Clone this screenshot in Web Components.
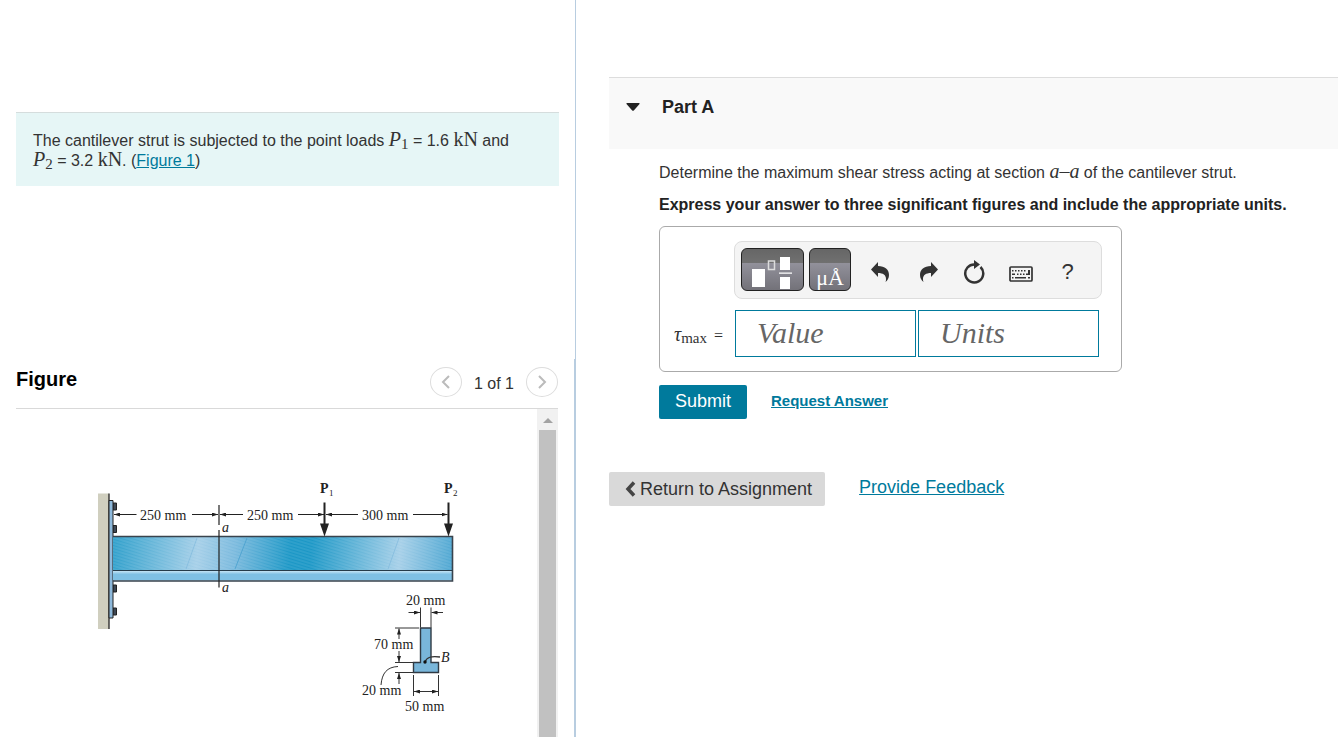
<!DOCTYPE html>
<html lang="en">
<head>
    <meta charset="utf-8">
    <meta name="viewport" content="width=device-width, initial-scale=1">
    <title>Cantilever strut</title>
    <style>
        body {
            margin: 0;
            font-family: "Liberation Sans", Arial, sans-serif;
            font-size: 16px;
            line-height: 20px;
            color: #333;
            background-color: #fff;
        }
    </style>
</head>
<body>
    <my-app></my-app>

    <script>
        class BaseElement extends HTMLElement {
            constructor() {
                super()

                this.attachShadow({ mode: 'open' });
            }
            connectedCallback() {
                // trimmed, so that inline elements add no spaces of their own
                this.shadowRoot.innerHTML = this.getTemplate().trim() + this.getStyles().trim();
            }
        }

        // Inline math: italic variable with an optional subscript
        class MathVar extends BaseElement {
            getTemplate() {
                return `<slot></slot><sub><slot name="sub"></slot></sub>`;
            }
            getStyles() {
                return `
                    <style>
                        :host {
                            font: italic 20px/1px "Liberation Serif", serif;
                        }
                        :host([upright]) {
                            font-style: normal;
                        }
                        sub {
                            font-size: 15px;
                            font-style: normal;
                            line-height: 1px;
                            vertical-align: -3px;
                        }
                    </style>
                `;
            }
        }
        customElements.define('math-var', MathVar);

        class ProblemStatement extends BaseElement {
            getTemplate() {
                return `<p><slot></slot></p>`;
            }
            getStyles() {
                return `
                    <style>
                        :host {
                            display: block;
                            padding: 18px 17px 15px;
                            border-top: 1px solid #d5dddd;
                            background-color: #e6f6f6;
                        }
                        p {
                            margin: 0;
                        }
                    </style>
                `;
            }
        }
        customElements.define('problem-statement', ProblemStatement);

        class CantileverDrawing extends BaseElement {
            getTemplate() {
                return `
                    <svg viewBox="16 409 521 328" role="img" aria-label="Cantilever strut with loads and cross section">
                        <defs>
                            <linearGradient id="web" gradientUnits="userSpaceOnUse" x1="113" y1="540" x2="453" y2="572">
                                <stop offset="0" stop-color="#2e9fcb"/>
                                <stop offset=".25" stop-color="#a5cfe8"/>
                                <stop offset=".36" stop-color="#79b9dd"/>
                                <stop offset=".52" stop-color="#1b97c6"/>
                                <stop offset=".58" stop-color="#1b97c6"/>
                                <stop offset=".84" stop-color="#a5cfe8"/>
                                <stop offset="1" stop-color="#4aa5d1"/>
                            </linearGradient>
                            <linearGradient id="flange" x1="0" y1="0" x2="0" y2="1">
                                <stop offset="0" stop-color="#c5e4f5"/>
                                <stop offset=".35" stop-color="#7fc0e4"/>
                                <stop offset="1" stop-color="#7fc0e4"/>
                            </linearGradient>
                            <pattern id="grain" width="12" height="3" patternUnits="userSpaceOnUse" patternTransform="rotate(17)">
                                <path d="M0 1h12" stroke="#fff" stroke-opacity=".16"/>
                            </pattern>
                            <marker id="tip" viewBox="0 0 6 4" refX="6" refY="2" markerWidth="6" markerHeight="4" markerUnits="userSpaceOnUse" orient="auto-start-reverse">
                                <path d="M0 0 6 2 0 4z" fill="#222"/>
                            </marker>
                        </defs>

                        <!-- wall and mounting plate -->
                        <path d="M98 493.500h11v135.500h-11z" fill="#d0cfbf"/>
                        <path d="M109 493.500v135.500" stroke="#222" stroke-width="1.300"/>
                        <g fill="#3e4854" stroke="#222">
                            <path d="M113 503h3.500v7h-3.500zM113 525.500h3.500v7h-3.500zM113 585h3.500v7h-3.500zM113 608h3.500v7h-3.500z"/>
                        </g>
                        <path d="M109 500.500h4v117.500h-4z" fill="#8eb9db" stroke="#222"/>

                        <!-- beam -->
                        <path d="M113 536.500h339.500v34h-339.500z" fill="url(#web)"/>
                        <path d="M113 536.500h339.500v34h-339.500z" fill="url(#grain)"/>
                        <path d="M197 538l-11 31M399 538l-11 31" stroke="#7fb9dc" stroke-width=".7"/>
                        <path d="M247 538l-12 31" stroke="#48a0ce" stroke-width=".8"/>
                        <path d="M113 571h339.500v9.500h-339.500z" fill="url(#flange)"/>
                        <path d="M113 536.500h339.500v44.500h-339.500" fill="none" stroke="#39434d" stroke-width="1.600"/>
                        <path d="M113 570.500h339.500" stroke="#263b4a" stroke-width="1.200"/>
                        <path d="M219 505v20M219 530v57.500" stroke="#222" stroke-width="1.200"/>

                        <!-- dimensions along the beam -->
                        <g stroke="#222" stroke-width="1" fill="none">
                            <path d="M136.500 514.500H114" marker-end="url(#tip)"/>
                            <path d="M192 514.500h26" marker-end="url(#tip)"/>
                            <path d="M243 514.500h-23" marker-end="url(#tip)"/>
                            <path d="M298 514.500h26" marker-end="url(#tip)"/>
                            <path d="M358 514.500h-32" marker-end="url(#tip)"/>
                            <path d="M413 514.500h34.500" marker-end="url(#tip)"/>
                        </g>
                        <path d="M324.500 502.500v24M448.500 502.500v24" stroke="#222" stroke-width="2"/>
                        <path d="M320 523.500h9l-4.500 13zM444 523.500h9l-4.500 13z" fill="#222"/>

                        <!-- cross section -->
                        <path d="M420.500 628h10.500v34.500h7.500v10h-25v-10h7z" fill="#79b6da" stroke="#303a44" stroke-width="1.400"/>
                        <g stroke="#333" stroke-width="1" fill="none">
                            <path d="M420.500 607.500v20M431 607.500v20M395 628h24M395 662.500h18M395 672.500h18M413.500 675v21M438.500 675v21"/>
                            <path d="M408.500 612.500h11.500" marker-end="url(#tip)"/>
                            <path d="M443 612.500h-11.500" marker-end="url(#tip)"/>
                            <path d="M399 639v-10.500" marker-end="url(#tip)"/>
                            <path d="M399 651v11" marker-end="url(#tip)"/>
                            <path d="M399 684v-11" marker-end="url(#tip)"/>
                            <path d="M414 691.500h24" marker-start="url(#tip)" marker-end="url(#tip)"/>
                            <path d="M381 685c1-12 6-18 17-18.500"/>
                            <path d="M425 662c2-5 6-6 15-5" stroke-width="1.300"/>
                        </g>
                        <circle cx="425" cy="662" r="1.700" fill="#111"/>

                        <g font-size="14" fill="#222">
                            <text x="140" y="520">250 mm</text>
                            <text x="247" y="520">250 mm</text>
                            <text x="362" y="520">300 mm</text>
                            <text x="406" y="605">20 mm</text>
                            <text x="374" y="649">70 mm</text>
                            <text x="362" y="695">20 mm</text>
                            <text x="405" y="711">50 mm</text>
                            <g font-style="italic">
                                <text x="222" y="532">a</text>
                                <text x="222" y="592">a</text>
                                <text x="441" y="662">B</text>
                            </g>
                            <text x="320" y="493" font-weight="bold">P</text>
                            <text x="329" y="496" font-size="9">1</text>
                            <text x="444" y="493" font-weight="bold">P</text>
                            <text x="453" y="496" font-size="9">2</text>
                        </g>
                    </svg>
                `;
            }
            getStyles() {
                return `
                    <style>
                        :host {
                            display: block;
                        }
                        svg {
                            display: block;
                            width: 100%;
                            font-family: "Liberation Serif", serif;
                        }
                    </style>
                `;
            }
        }
        customElements.define('cantilever-drawing', CantileverDrawing);

        class FigurePanel extends BaseElement {
            getTemplate() {
                return `
                    <header>
                        <h2>Figure</h2>
                        <nav>
                            <button aria-label="Previous figure"><svg width="10" height="14" viewBox="0 0 10 14"><path d="M8 1 2 7l6 6"/></svg></button>
                            <span>1 of 1</span>
                            <button aria-label="Next figure"><svg width="10" height="14" viewBox="0 0 10 14"><path d="m2 1 6 6-6 6"/></svg></button>
                        </nav>
                    </header>
                    <div class="viewport">
                        <slot></slot>
                        <div class="scrollbar">
                            <svg width="10" height="5" viewBox="0 0 10 5"><path d="M0 5 5 0l5 5z"/></svg>
                            <div class="thumb"></div>
                        </div>
                    </div>
                `;
            }
            getStyles() {
                return `
                    <style>
                        :host {
                            display: flex;
                            flex-direction: column;
                            min-height: 0;
                        }
                        header {
                            display: flex;
                            justify-content: space-between;
                            padding: 8px 0 11px;
                            border-bottom: 1px solid #d9d9d9;
                        }
                        h2 {
                            margin: 0;
                            font-size: 20px;
                            line-height: 24px;
                            color: #000;
                        }
                        nav {
                            display: flex;
                            align-items: center;
                            gap: 12px;
                        }
                        nav span {
                            padding-top: 4px;
                        }
                        button {
                            display: flex;
                            align-items: center;
                            justify-content: center;
                            width: 32px;
                            height: 30px;
                            padding: 0;
                            border: 1px solid #ddd;
                            border-radius: 50%;
                            background-color: #fff;
                        }
                        button path {
                            fill: none;
                            stroke: #bbb;
                            stroke-width: 2;
                        }
                        .viewport {
                            display: flex;
                            flex: 1;
                            min-height: 0;
                            overflow: hidden;
                        }
                        ::slotted(*) {
                            flex: 1;
                        }
                        .scrollbar {
                            display: flex;
                            flex-direction: column;
                            align-items: center;
                            gap: 7px;
                            width: 21px;
                            padding-top: 9px;
                            background-color: #f1f1f1;
                        }
                        .scrollbar path {
                            fill: #a3a3a3;
                        }
                        .thumb {
                            flex: 1;
                            width: 17px;
                            background-color: #c1c1c1;
                        }
                    </style>
                `;
            }
        }
        customElements.define('figure-panel', FigurePanel);

        class PartHeader extends BaseElement {
            getTemplate() {
                return `
                    <svg width="14" height="8" viewBox="0 0 14 8"><path d="M1 0h12q1 0 .500 1L8 7.300q-1 1-2 0L.500 1Q0 0 1 0z" fill="#222"/></svg>
                    <h2><slot></slot></h2>
                `;
            }
            getStyles() {
                return `
                    <style>
                        :host {
                            display: flex;
                            align-items: center;
                            gap: 22px;
                            padding: 18px 17px 31px;
                            border-top: 1px solid #ddd;
                            background-color: #f9f9f9;
                        }
                        h2 {
                            margin: 0;
                            font-size: 18px;
                            line-height: 22px;
                            color: #222;
                        }
                    </style>
                `;
            }
        }
        customElements.define('part-header', PartHeader);

        class EditorToolbar extends BaseElement {
            getTemplate() {
                return `
                    <button class="dark templates" aria-label="Templates">
                        <svg width="42" height="32" viewBox="0 0 42 32">
                            <path d="M0 12h13v18H0zM28 0h10v13H28zM28 20h10v12H28zM27 15.500h13v1.300H27z" fill="#fff"/>
                            <path d="M16.500 4h6v8.500h-6z" fill="none" stroke="#ddd" stroke-width="1.500"/>
                        </svg>
                    </button>
                    <button class="dark symbols" aria-label="Symbols">μÅ</button>
                    <button class="plain" aria-label="Undo">
                        <svg width="18" height="20" viewBox="0 0 18 20"><path d="M7 0v4c7 0 11 3.500 11 9 0 3-1.500 5.500-3.500 7 .500-1 .500-2 .500-3 0-4-3-6-8-6v4L0 7.500z"/></svg>
                    </button>
                    <button class="plain" aria-label="Redo">
                        <svg width="22" height="20" viewBox="-4 0 22 20"><path d="M11 0v4C4 4 0 7.500 0 13c0 3 1.500 5.500 3.500 7-.500-1-.500-2-.500-3 0-4 3-6 8-6v4l7-7.500z"/></svg>
                    </button>
                    <button class="plain" aria-label="Reset">
                        <svg width="22" height="24" viewBox="0 0 22 24"><path d="M11 0v9l6-4.500z"/><path d="M12 4.500A9 9 0 1 0 17.500 7" fill="none" stroke="#333" stroke-width="2.500"/></svg>
                    </button>
                    <button class="plain" aria-label="Keyboard shortcuts">
                        <svg class="keyboard" width="24" height="16" viewBox="0 0 24 16">
                            <rect x="1" y="1" width="22" height="14" rx="1" fill="none" stroke="#333" stroke-width="1.700"/>
                            <path d="M3 4h1.500v1.500H3zM6 4h1.500v1.500H6zM9 4h1.500v1.500H9zM12 4h1.500v1.500H12zM15 4h1.500v1.500H15zM19 4h2v5h-4V7.500h2zM3 7.500h3V9H3zM8 7.500h1.500V9H8zM11 7.500h1.500V9H11zM14 7.500h1.500V9H14zM3 11h1.500v1.500H3zM6 11h11v1.500H6zM19 11h2v1.500h-2z"/>
                        </svg>
                    </button>
                    <button class="plain help" aria-label="Help">?</button>
                `;
            }
            getStyles() {
                return `
                    <style>
                        :host {
                            display: flex;
                            align-items: flex-start;
                            padding: 6px;
                            border: 1px solid #ddd;
                            border-radius: 8px;
                            background-color: #f4f4f4;
                        }
                        button {
                            display: flex;
                            align-items: center;
                            justify-content: center;
                            height: 44px;
                            padding: 0;
                            border: 0;
                        }
                        .dark {
                            height: 43px;
                            margin-right: 5px;
                            border: 1px solid #222;
                            border-radius: 6px;
                            background: linear-gradient(#666 0%, #707070 33%, #92919b 34%, #737279 100%);
                            color: #fff;
                        }
                        .templates {
                            width: 63px;
                            padding-top: 6px;
                        }
                        .symbols {
                            width: 42px;
                            padding-top: 17px;
                            font: 22px/24px "Liberation Serif", serif;
                        }
                        .plain {
                            width: 47px;
                            padding-top: 3px;
                            background: none;
                            color: #333;
                        }
                        .plain path {
                            fill: #333;
                        }
                        .plain path[fill="none"] {
                            fill: none;
                        }
                        .keyboard {
                            padding-top: 5px;
                        }
                        .help {
                            font: 22px/24px "Liberation Sans", Arial, sans-serif;
                        }
                    </style>
                `;
            }
        }
        customElements.define('editor-toolbar', EditorToolbar);

        class AnswerEditor extends BaseElement {
            getTemplate() {
                return `
                    <editor-toolbar></editor-toolbar>
                    <label for="value"><i>τ</i><span>max</span> =</label>
                    <div class="fields">
                        <input id="value" type="text" placeholder="Value">
                        <input type="text" placeholder="Units" aria-label="Units">
                    </div>
                `;
            }
            getStyles() {
                return `
                    <style>
                        :host {
                            display: grid;
                            grid-template-columns: 60px 368px;
                            row-gap: 11px;
                            width: max-content;
                            padding: 14px 19px 14px 14px;
                            border: 1px solid #aaa;
                            border-radius: 6px;
                        }
                        editor-toolbar {
                            grid-column: 2;
                        }
                        label {
                            align-self: center;
                            padding-top: 4px;
                            font-family: "Liberation Serif", serif;
                            white-space: nowrap;
                        }
                        label i {
                            font-size: 20px;
                        }
                        label span {
                            margin-right: 3px;
                            font-size: 15px;
                            vertical-align: -2px;
                        }
                        .fields {
                            display: flex;
                            gap: 2px;
                            padding: 0 3px 0 1px;
                        }
                        input {
                            box-sizing: border-box;
                            flex: 1;
                            min-width: 0;
                            height: 47px;
                            padding: 0 21px 2px;
                            border: 1px solid #007a9c;
                            background-color: #fff;
                            font: italic 30px/36px "Liberation Serif", serif;
                        }
                        input::placeholder {
                            color: #666;
                        }
                    </style>
                `;
            }
        }
        customElements.define('answer-editor', AnswerEditor);

        class PartPanel extends BaseElement {
            getTemplate() {
                return `
                    <part-header>Part A</part-header>
                    <div class="content">
                        <p>Determine the maximum shear stress acting at section <math-var>a</math-var><math-var upright>–</math-var><math-var>a</math-var> of the cantilever strut.</p>
                        <p class="instructions">Express your answer to three significant figures and include the appropriate units.</p>
                        <answer-editor></answer-editor>
                        <div class="actions">
                            <button class="submit">Submit</button>
                            <a href="#answer">Request Answer</a>
                        </div>
                    </div>
                    <footer>
                        <button class="return"><svg width="11" height="16" viewBox="0 0 11 16"><path d="M9 1.500 3 8l6 6.500" fill="none" stroke="#444" stroke-width="3.500"/></svg>Return to Assignment</button>
                        <a href="#feedback">Provide Feedback</a>
                    </footer>
                `;
            }
            getStyles() {
                return `
                    <style>
                        :host {
                            display: block;
                            padding: 77px 0 0 33px;
                        }
                        .content {
                            padding: 14px 0 0 50px;
                        }
                        p {
                            margin: 0 0 12px;
                        }
                        .instructions {
                            margin-bottom: 11px;
                            font-weight: bold;
                            color: #222;
                        }
                        .actions, footer {
                            display: flex;
                            align-items: center;
                        }
                        .actions {
                            gap: 24px;
                            margin-top: 13px;
                        }
                        footer {
                            gap: 34px;
                            margin-top: 53px;
                        }
                        button {
                            height: 34px;
                            padding: 0 16px;
                            border: 0;
                            border-radius: 2px;
                            font: 18px/22px "Liberation Sans", Arial, sans-serif;
                        }
                        .submit {
                            padding-bottom: 2px;
                            background-color: #007a9c;
                            color: #fff;
                        }
                        .return {
                            display: flex;
                            align-items: center;
                            gap: 4px;
                            padding-right: 13px;
                            background-color: #d9d9d9;
                            color: #333;
                        }
                        a {
                            padding-bottom: 2px;
                            color: #007a9c;
                        }
                        .actions a {
                            font-size: 15px;
                            font-weight: bold;
                        }
                        footer a {
                            padding-bottom: 4px;
                            font-size: 18px;
                        }
                    </style>
                `;
            }
        }
        customElements.define('part-panel', PartPanel);

        class MyApp extends BaseElement {
            getTemplate() {
                return `
                    <main>
                        <section class="left">
                            <div class="problem--section">
                                <problem-statement>The cantilever strut is subjected to the point loads <span class="equation"><math-var>P<span slot="sub">1</span></math-var> = 1.6 <math-var upright>kN</math-var></span> and <span class="equation"><math-var>P<span slot="sub">2</span></math-var> = 3.2 <math-var upright>kN</math-var></span>. (<a href="#figure">Figure 1</a>)</problem-statement>
                            </div>
                            <div class="figure--section">
                                <figure-panel>
                                    <cantilever-drawing></cantilever-drawing>
                                </figure-panel>
                            </div>
                        </section>
                        <part-panel></part-panel>
                    </main>
                `;
            }
            getStyles() {
                return `
                    <style>
                        :host {
                            display: block;
                        }
                        main {
                            display: grid;
                            grid-template-columns: 96fr 127fr;
                            height: 100vh;
                            overflow: hidden;
                        }
                        .left {
                            display: flex;
                            flex-direction: column;
                            min-height: 0;
                        }
                        .problem--section {
                            padding: 112px 16px 173px;
                            border-right: 1px solid #b8cde0;
                        }
                        .equation {
                            white-space: nowrap;
                        }
                        .figure--section {
                            display: flex;
                            flex: 1;
                            min-height: 0;
                            padding: 0 16px;
                            border-right: 2px solid #b8cde0;
                        }
                        figure-panel {
                            flex: 1;
                        }
                        a {
                            color: #007a9c;
                        }
                    </style>
                `;
            }
        }
        customElements.define('my-app', MyApp);
    </script>
</body>
</html>
